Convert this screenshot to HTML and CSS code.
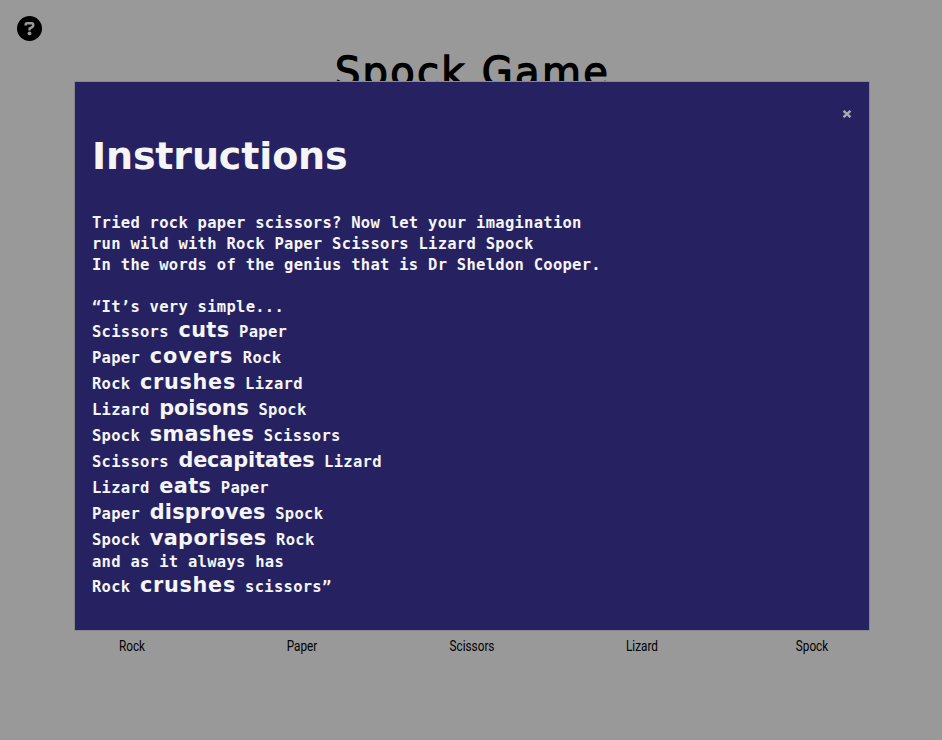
FILE: index.html
```html
<!DOCTYPE html>
<html lang="en">
<head>
<meta charset="utf-8">
<title>Spock Game</title>
<link rel="stylesheet" href="styles.css">
</head>
<body>
<main class="game">
  <svg class="help" viewBox="0 0 25 25" aria-label="Help"><circle cx="12.5" cy="12.5" r="12.5"/><path d="M8.7 9.4V8.6Q8.7 7.3 10.1 7.3H14.7Q16.2 7.3 16.2 8.6V9.5Q16.2 10.8 14.8 11.3L12.6 12.4V14.5"/><circle class="dot" cx="12.5" cy="17.4" r="1.9"/></svg>
  <h1 class="title">Spock Game</h1>
  <div class="choices">
    <span class="choice">Rock</span>
    <span class="choice">Paper</span>
    <span class="choice">Scissors</span>
    <span class="choice">Lizard</span>
    <span class="choice">Spock</span>
  </div>
</main>
<div class="overlay">
  <section class="modal">
    <div class="close"><svg viewBox="0 0 10 8"><path d="M1.5 0.8L8.5 7.2M8.5 0.8L1.5 7.2"/></svg></div>
    <h2>Instructions</h2>
    <p>Tried rock paper scissors? Now let your imagination</p>
    <p>run wild with Rock Paper Scissors Lizard Spock</p>
    <p>In the words of the genius that is Dr Sheldon Cooper.</p>
    <p class="quote">“It’s very simple...</p>
    <p class="rule">Scissors <b class="cuts">cuts</b> Paper</p>
    <p class="rule">Paper <b class="covers">covers</b> Rock</p>
    <p class="rule">Rock <b class="crushes">crushes</b> Lizard</p>
    <p class="rule">Lizard <b class="poisons">poisons</b> Spock</p>
    <p class="rule">Spock <b class="smashes">smashes</b> Scissors</p>
    <p class="rule">Scissors <b class="decapitates">decapitates</b> Lizard</p>
    <p class="rule">Lizard <b class="eats">eats</b> Paper</p>
    <p class="rule">Paper <b class="disproves">disproves</b> Spock</p>
    <p class="rule">Spock <b class="vaporises">vaporises</b> Rock</p>
    <p>and as it always has</p>
    <p class="rule">Rock <b class="crushes">crushes</b> scissors”</p>
  </section>
</div>
</body>
</html>
```
FILE: styles.css
```css
* { box-sizing: border-box; }
body { margin: 0; height: 740px; overflow: hidden; background: #fff; }
.game { height: 740px; display: flex; flex-direction: column; align-items: stretch; }
.help { width: 25px; height: 25px; margin: 16px 0 0 17px; flex: none; }
.help path { fill: none; stroke: #fff; stroke-width: 2.5; }
.help .dot { fill: #fff; }
.title { margin: 6px 0 0; padding-left: 3px; height: 50px; text-align: center; font: 400 40px/50px "DejaVu Sans", sans-serif; letter-spacing: 2.3px; -webkit-text-stroke: 1.3px #000; white-space: nowrap; }
.choices { margin: 541px 0 0 47px; width: 850px; display: grid; grid-template-columns: repeat(5, 170px); font: 400 14px/16px Roboto, sans-serif; color: #000; text-align: center; }
.choice { transform: scaleX(.84); }
.overlay { position: absolute; inset: 0; background: rgba(0, 0, 0, .4); padding: 81px 0 0 74px; }
.modal { width: 796px; height: 550px; border: 1px solid #888; background: #262261; color: #f5f5f5; padding: 28px 17px 0; font: 700 15.5px/21px "DejaVu Sans Mono", monospace; letter-spacing: .27px; }
.close { height: 8px; display: flex; justify-content: flex-end; }
.close svg { width: 10px; height: 8px; }
.close path { stroke: #aaa; stroke-width: 2.4; }
h2 { margin: 13px 0 32px; font: 700 38px/50px "DejaVu Sans", sans-serif; letter-spacing: -.15px; }
p { margin: 0; height: 21px; white-space: pre; }
.quote { margin-top: 21px; }
.rule { height: 26px; padding-top: 4px; }
b { display: inline-block; height: 21px; margin-top: -2px; vertical-align: top; font: 700 20.8px/20px "DejaVu Sans", sans-serif; white-space: nowrap; }
.cuts { width: 51.1px; letter-spacing: .4px; }
.covers { width: 83.6px; letter-spacing: 1.15px; }
.crushes { width: 95.5px; letter-spacing: .7px; }
.poisons { width: 89.7px; letter-spacing: -.1px; }
.smashes { width: 104.6px; letter-spacing: .4px; }
.decapitates { width: 136.1px; letter-spacing: -.15px; }
.eats { width: 52px; letter-spacing: .4px; }
.disproves { width: 116px; letter-spacing: .25px; }
.vaporises { width: 116.9px; letter-spacing: .45px; }
```
